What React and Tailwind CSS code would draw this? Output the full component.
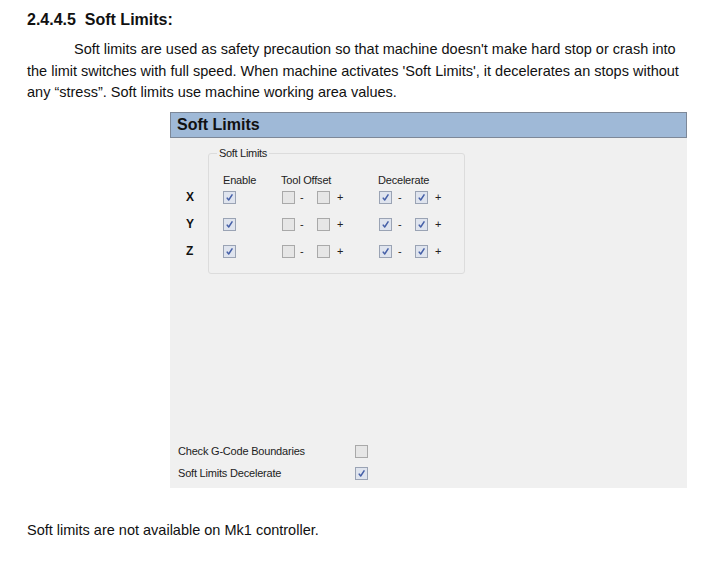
import React from "react";

function Box({ checked }) {
  return (
    <span
      className={
        "inline-flex w-[13px] h-[13px] shrink-0 items-center justify-center border " +
        (checked
          ? "border-[#9aa3b4] bg-[#dfe4ee]"
          : "border-[#a9a9a9] bg-[#e6e6e6]")
      }
    >
      {checked && (
        <svg width="11" height="11" viewBox="0 0 11 11">
          <path
            d="M2.8 5.6 L4.7 8 L8.4 2.4"
            fill="none"
            stroke="#4660a8"
            strokeWidth="1.5"
            strokeLinejoin="round"
          />
        </svg>
      )}
    </span>
  );
}

function Row() {
  return (
    <div className="h-[27px] grid grid-cols-[59px_97px_auto] items-start">
      <div>
        <Box checked />
      </div>
      <div className="flex items-center h-[13px]">
        <Box />
        <span className="w-[22px] pl-[5px] leading-[13px]">-</span>
        <Box />
        <span className="pl-[7px] leading-[13px]">+</span>
      </div>
      <div className="flex items-center h-[13px]">
        <Box checked />
        <span className="w-[23px] pl-[6px] leading-[13px]">-</span>
        <Box checked />
        <span className="pl-[7px] leading-[13px]">+</span>
      </div>
    </div>
  );
}

export default function App() {
  return (
    <div className="w-[726px] h-[562px] bg-white text-[#111] font-['Liberation_Sans',Arial,sans-serif] overflow-hidden">
      <div className="pl-[27px] pt-[9px] text-[16px] font-bold leading-[21px] whitespace-pre">
        {"2.4.4.5  Soft Limits:"}
      </div>
      <div className="mt-[9px] pl-[27px] text-[14.5px] leading-[21.5px] whitespace-nowrap">
        <div className="pl-[47px]">
          Soft limits are used as safety precaution so that machine doesn't make hard stop or crash into
        </div>
        <div>
          the limit switches with full speed. When machine activates 'Soft Limits', it decelerates an stops without
        </div>
        <div>any “stress”. Soft limits use machine working area values.</div>
      </div>

      <div className="ml-[170px] mt-[8px] w-[517px]">
        <div className="h-[26px] border border-[#7d8898] bg-[#9fb9d7] pl-[6px] flex items-center text-[16px] font-bold">
          Soft Limits
        </div>
        <div className="h-[350px] bg-[#f0f0f0] flex flex-col text-[11px] text-[#222]">
          <div className="flex pt-[15px]">
            <div className="w-[38px] pl-[16px] pt-[31px] flex flex-col font-bold text-[12px] text-[#111]">
              <span className="h-[27px] leading-[27px]">X</span>
              <span className="h-[27px] leading-[27px]">Y</span>
              <span className="h-[27px] leading-[27px]">Z</span>
            </div>
            <div className="relative w-[257px] h-[121px] border border-[#dcdcdc] rounded-[3px] pt-[19px] pl-[14px]">
              <span className="absolute -top-[8px] left-[8px] px-[2px] bg-[#f0f0f0] leading-[14px] tracking-[-0.3px]">
                Soft Limits
              </span>
              <div className="h-[14px] grid grid-cols-[59px_97px_auto] leading-[14px] tracking-[-0.2px]">
                <span>Enable</span>
                <span className="-ml-px">Tool Offset</span>
                <span className="-ml-px">Decelerate</span>
              </div>
              <div className="mt-[4px]">
                <Row />
                <Row />
                <Row />
              </div>
            </div>
          </div>
          <div className="mt-auto pb-[3px]">
            <div className="h-[22px] flex items-center">
              <span className="w-[185px] pl-[8px] tracking-[-0.2px]">Check G-Code Boundaries</span>
              <Box />
            </div>
            <div className="h-[22px] flex items-center">
              <span className="w-[185px] pl-[8px] tracking-[-0.2px]">Soft Limits Decelerate</span>
              <Box checked />
            </div>
          </div>
        </div>
      </div>

      <div className="mt-[32px] pl-[27px] text-[14.5px] leading-[20px]">
        Soft limits are not available on Mk1 controller.
      </div>
    </div>
  );
}
